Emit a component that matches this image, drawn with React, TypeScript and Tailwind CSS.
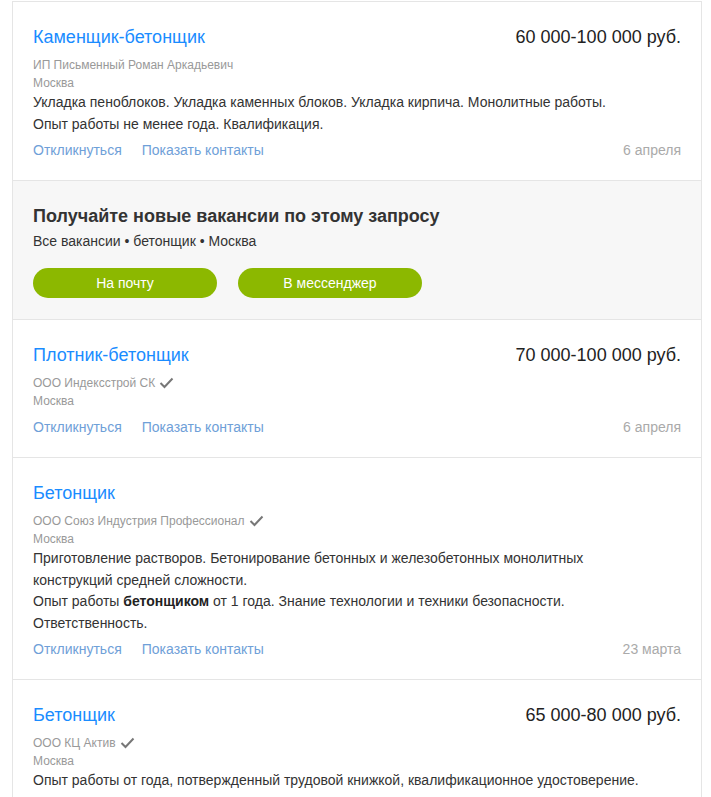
import { ReactNode } from "react";

type Vacancy = {
  title: string;
  salary?: string;
  company: string;
  verified?: boolean;
  city: string;
  text?: ReactNode[];
  date: string;
};

const vacancies: Vacancy[] = [
  {
    title: "Каменщик-бетонщик",
    salary: "60 000-100 000 руб.",
    company: "ИП Письменный Роман Аркадьевич",
    city: "Москва",
    text: [
      "Укладка пеноблоков. Укладка каменных блоков. Укладка кирпича. Монолитные работы.",
      "Опыт работы не менее года. Квалификация.",
    ],
    date: "6 апреля",
  },
  {
    title: "Плотник-бетонщик",
    salary: "70 000-100 000 руб.",
    company: "ООО Индексстрой СК",
    verified: true,
    city: "Москва",
    date: "6 апреля",
  },
  {
    title: "Бетонщик",
    company: "ООО Союз Индустрия Профессионал",
    verified: true,
    city: "Москва",
    text: [
      "Приготовление растворов. Бетонирование бетонных и железобетонных монолитных конструкций средней сложности.",
      <>
        Опыт работы <b className="text-[#222]">бетонщиком</b> от 1 года. Знание технологии и техники безопасности.
        Ответственность.
      </>,
    ],
    date: "23 марта",
  },
  {
    title: "Бетонщик",
    salary: "65 000-80 000 руб.",
    company: "ООО КЦ Актив",
    verified: true,
    city: "Москва",
    text: ["Опыт работы от года, потвержденный трудовой книжкой, квалификационное удостоверение."],
    date: "22 марта",
  },
];

function Check() {
  return (
    <svg width="15" height="12" viewBox="0 0 15 12" className="ml-[4px] inline-block">
      <polyline points="1.5,6 5.5,10 13.5,1.5" fill="none" stroke="#777" strokeWidth="2" />
    </svg>
  );
}

function VacancyCard({ v, first }: { v: Vacancy; first?: boolean }) {
  return (
    <div className={"px-5 pt-[23px] pb-[20px] bg-white" + (first ? "" : " border-t border-[#e5e5e5]")}>
      <div className="flex justify-between items-center h-6">
        <a className="text-[18px] leading-6 text-[#1a8cff]">{v.title}</a>
        {v.salary && <div className="text-[18px] leading-6 text-[#222]">{v.salary}</div>}
      </div>
      <div className="mt-[7px] text-[12px] leading-[18px] text-[#999] flex items-center">
        {v.company}
        {v.verified && <Check />}
      </div>
      <div className="text-[12px] leading-[18px] text-[#999]">{v.city}</div>
      {v.text && (
        <div className="max-w-[620px] text-[14px] leading-[21.5px] text-[#333]">
          {v.text.map((t, i) => (
            <p key={i}>{t}</p>
          ))}
        </div>
      )}
      <div className={"flex items-center text-[14px] leading-5 " + (v.text ? "mt-[5px]" : "mt-[7px]")}>
        <a className="text-[#6fa0d8]">Откликнуться</a>
        <a className="ml-5 text-[#6fa0d8]">Показать контакты</a>
        <span className="ml-auto text-[#aaa]">{v.date}</span>
      </div>
    </div>
  );
}

function Subscribe() {
  return (
    <div className="border-t border-[#e5e5e5] bg-[#f7f7f7] px-5 pt-[23px] pb-[21px]">
      <h3 className="text-[18px] leading-6 font-bold text-[#333]">Получайте новые вакансии по этому запросу</h3>
      <p className="mt-[3px] text-[14px] leading-5 text-[#333]">Все вакансии • бетонщик • Москва</p>
      <div className="mt-[17px] flex gap-[21px]">
        <button className="w-[184px] h-[30px] rounded-full bg-[#8cb800] text-white text-[14px]">На почту</button>
        <button className="w-[184px] h-[30px] rounded-full bg-[#8cb800] text-white text-[14px]">В мессенджер</button>
      </div>
    </div>
  );
}

export default function App() {
  return (
    <div className="min-h-screen bg-white pt-px font-['Liberation_Sans',Arial,sans-serif]">
      <div className="ml-[12px] w-[690px] border border-[#e5e5e5]">
        <VacancyCard v={vacancies[0]} first />
        <Subscribe />
        {vacancies.slice(1).map((v, i) => (
          <VacancyCard key={i} v={v} />
        ))}
      </div>
    </div>
  );
}
